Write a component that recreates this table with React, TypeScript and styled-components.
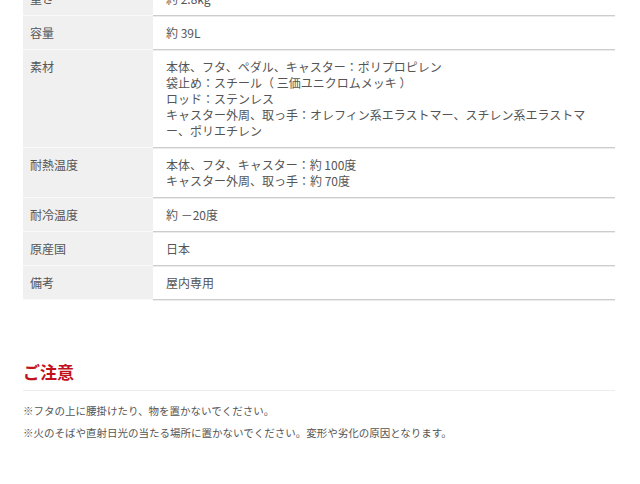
import React from "react"
import styled, { createGlobalStyle } from "styled-components"

const GlobalStyle = createGlobalStyle`
  html, body {
    margin: 0;
    padding: 0;
    background: #fff;
    font-family: "Noto Sans CJK JP", "Noto Sans", sans-serif;
    color: #555;
    overflow: hidden;
  }
`

interface Spec {
  label: string
  lines: string[]
}

const specs: Spec[] = [
  { label: "重さ", lines: ["約 2.8kg"] },
  { label: "容量", lines: ["約 39L"] },
  {
    label: "素材",
    lines: [
      "本体、フタ、ペダル、キャスター：ポリプロピレン",
      "袋止め：スチール（ 三価ユニクロムメッキ ）",
      "ロッド：ステンレス",
      "キャスター外周、取っ手：オレフィン系エラストマー、スチレン系エラストマー、ポリエチレン",
    ],
  },
  {
    label: "耐熱温度",
    lines: ["本体、フタ、キャスター：約 100度", "キャスター外周、取っ手：約 70度"],
  },
  { label: "耐冷温度", lines: ["約 －20度"] },
  { label: "原産国", lines: ["日本"] },
  { label: "備考", lines: ["屋内専用"] },
]

const notes = [
  "※フタの上に腰掛けたり、物を置かないでください。",
  "※火のそばや直射日光の当たる場所に置かないでください。変形や劣化の原因となります。",
]

const Page = styled.div`
  width: 592px;
  margin: 0 0 0 23px;
`

// the first row is scrolled half out of view in the reference
const SpecTable = styled.div`
  margin-top: -18px;
`

const SpecRow = styled.div`
  display: grid;
  grid-template-columns: 130px 1fr;
  font-size: 12px;
  line-height: 16px;
`

const Label = styled.div`
  background: #f0f0f0;
  padding: 9px 8px 8px 7px;
  border-bottom: 1px solid #fafafa;
`

const Value = styled.div`
  padding: 9px 20px 8px 13px;
  border-bottom: 1px solid #cdcdcd;
  box-shadow: 0 1px 0 #ececec;
`

const Line = styled.div``

const Caution = styled.section`
  margin-top: 60px;
`

const Heading = styled.h2`
  margin: 0;
  padding-bottom: 6px;
  font-size: 17px;
  line-height: 24px;
  font-weight: bold;
  color: #c1121c;
  border-bottom: 1px solid #ededed;
`

const NoteList = styled.div`
  margin-top: 9px;
  font-size: 10.5px;
  line-height: 22px;
  color: #555;
`

export default function App() {
  return (
    <>
      <GlobalStyle />
      <Page>
        <SpecTable>
          {specs.map((s) => (
            <SpecRow key={s.label}>
              <Label>{s.label}</Label>
              <Value>
                {s.lines.map((l) => (
                  <Line key={l}>{l}</Line>
                ))}
              </Value>
            </SpecRow>
          ))}
        </SpecTable>
        <Caution>
          <Heading>ご注意</Heading>
          <NoteList>
            {notes.map((n) => (
              <div key={n}>{n}</div>
            ))}
          </NoteList>
        </Caution>
      </Page>
    </>
  )
}
